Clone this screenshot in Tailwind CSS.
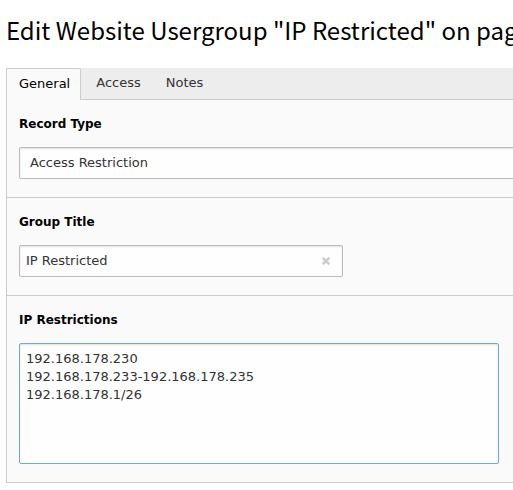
<!DOCTYPE html>
<html lang="en">
<head>
<meta charset="utf-8">
<meta name="viewport" content="width=device-width, initial-scale=1">
<title>Edit Website Usergroup</title>
<script src="https://cdn.jsdelivr.net/npm/@tailwindcss/browser@4"></script>
</head>
<body class="overflow-x-hidden bg-white pl-1.5 font-['DejaVu_Sans',Verdana,sans-serif] text-[12px] leading-[18px] text-[#333]">
<h1 class="overflow-hidden pt-2.5 pb-[18px] font-['Noto_Sans_CJK_SC',sans-serif] text-[24px] leading-[40px] whitespace-nowrap text-black">Edit Website Usergroup "IP Restricted" on page</h1>
<main>
  <div role="tablist" class="flex h-8 gap-[3px] border-b border-[#ccc] bg-[#ededed]">
    <button type="button" role="tab" aria-selected="true" class="-mb-px rounded-t-xs border border-b-0 border-[#ccc] bg-[#fafafa] pr-2.5 pb-0.5 pl-3 text-[13px] text-black">General</button>
    <button type="button" role="tab" aria-selected="false" class="pr-2.5 pb-0.5 pl-3 text-[13px]">Access</button>
    <button type="button" role="tab" aria-selected="false" class="pr-2.5 pb-0.5 pl-3 text-[13px]">Notes</button>
  </div>
  <form class="overflow-hidden border-l border-[#ccc] bg-[#fafafa]">
    <section class="flex flex-col gap-3.5 border-b border-[#ccc] pt-[15px] pb-[18px] pl-3">
      <label for="type" class="font-bold text-black">Record Type</label>
      <select id="type" class="-mr-2 h-8 appearance-none rounded-xs border border-[#bbb] bg-[#fefefe] pl-[10px] text-[13px] shadow-[inset_0_1px_2px_rgba(0,0,0,0.12)] outline-none">
        <option>Access Restriction</option>
      </select>
    </section>
    <section class="flex flex-col gap-3.5 border-b border-[#ccc] pt-[15px] pb-[18px] pl-3">
      <label for="title" class="font-bold text-black">Group Title</label>
      <div class="flex h-8 w-full max-w-[324px] items-center rounded-xs border border-[#bbb] bg-[#fefefe] shadow-[inset_0_1px_2px_rgba(0,0,0,0.12)]">
        <input id="title" type="text" value="IP Restricted" class="h-full min-w-0 flex-1 bg-transparent pb-0.5 pl-1.5 text-[13px] outline-none">
        <button type="button" aria-label="Clear" class="flex h-full w-8 items-center justify-center text-[#ccc]">
          <svg class="size-2" viewBox="0 0 8 8" fill="none" stroke="currentColor" stroke-width="2.4"><path d="M.8.8l6.4 6.4M7.2.8L.8 7.2"/></svg>
        </button>
      </div>
    </section>
    <section class="flex flex-col gap-3.5 border-b border-[#ccc] pt-[15px] pb-[18px] pl-3">
      <label for="ips" class="font-bold text-black">IP Restrictions</label>
      <textarea id="ips" class="h-[121px] w-full max-w-[480px] resize-none rounded-xs border border-[#6daae0] bg-[#fefefe] px-1.5 py-1.5 text-[13px] shadow-[inset_0_1px_2px_rgba(0,0,0,0.12)] outline-none">192.168.178.230
192.168.178.233-192.168.178.235
192.168.178.1/26</textarea>
    </section>
  </form>
</main>
</body>
</html>
